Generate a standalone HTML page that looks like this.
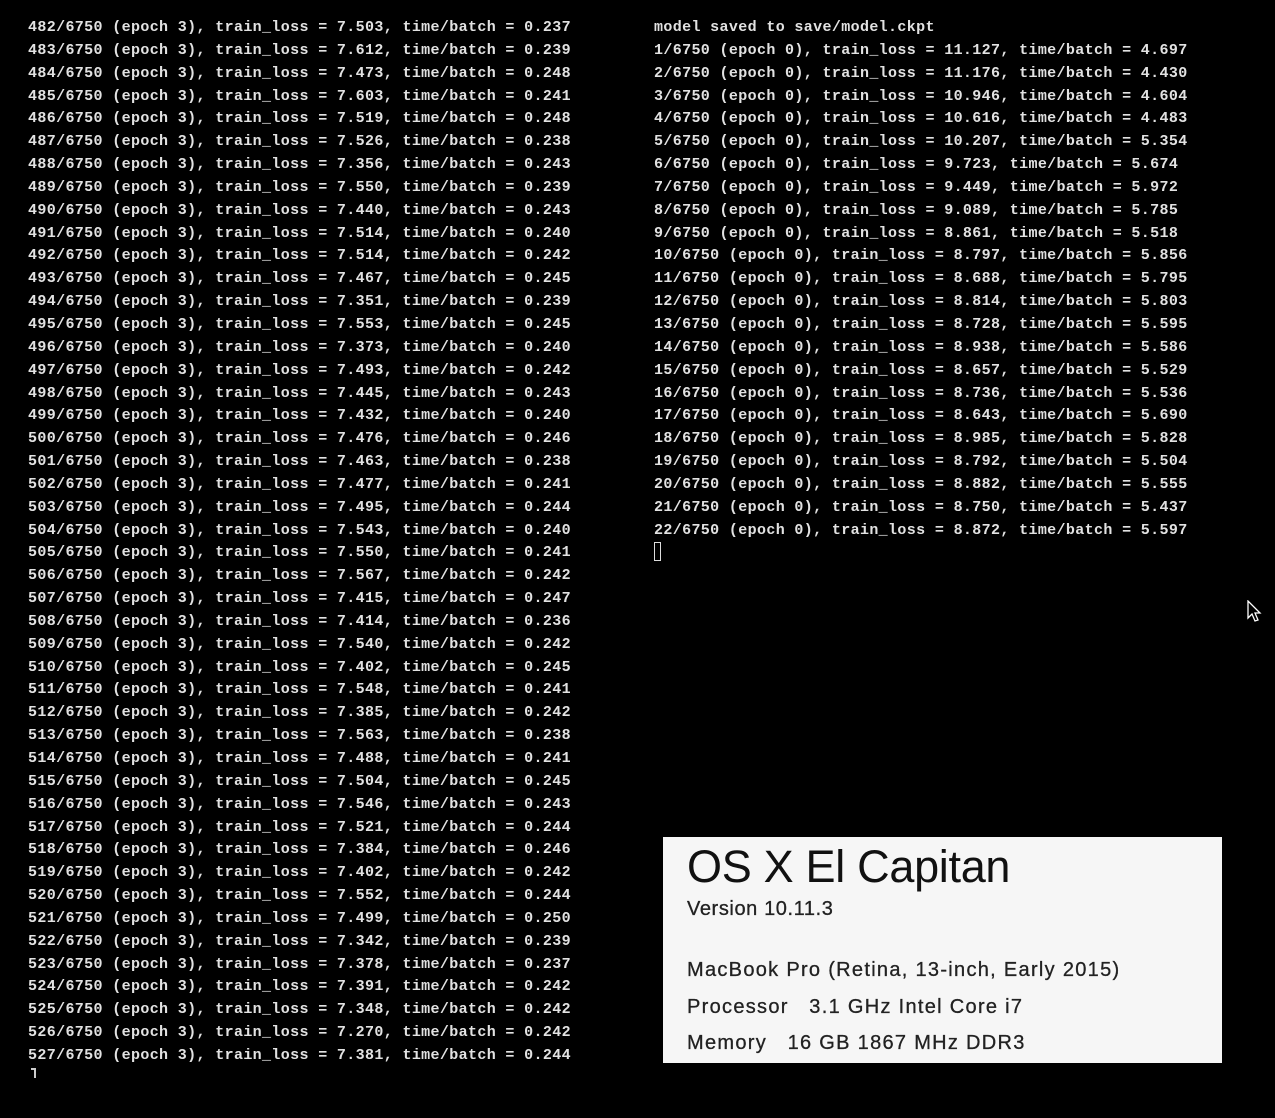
<!DOCTYPE html>
<html><head><meta charset="utf-8"><style>
body{margin:0;background:#000;width:1275px;height:1118px;overflow:hidden;position:relative}
.t{position:absolute;font-family:"Liberation Mono",monospace;font-weight:bold;font-size:15px;letter-spacing:0.36px;line-height:22.84px;color:#e2e2e2;white-space:pre;margin:0}
.box{position:absolute;left:663px;top:837px;width:559px;height:226px;background:#f6f6f6;font-family:"Liberation Sans",sans-serif;color:#222}
.box div{position:absolute;left:24px;white-space:nowrap}
.s{font-size:20px;letter-spacing:1.3px;-webkit-text-stroke:0.3px #222}
</style></head><body>
<pre class="t" style="left:28px;top:17px">482/6750 (epoch 3), train_loss = 7.503, time/batch = 0.237
483/6750 (epoch 3), train_loss = 7.612, time/batch = 0.239
484/6750 (epoch 3), train_loss = 7.473, time/batch = 0.248
485/6750 (epoch 3), train_loss = 7.603, time/batch = 0.241
486/6750 (epoch 3), train_loss = 7.519, time/batch = 0.248
487/6750 (epoch 3), train_loss = 7.526, time/batch = 0.238
488/6750 (epoch 3), train_loss = 7.356, time/batch = 0.243
489/6750 (epoch 3), train_loss = 7.550, time/batch = 0.239
490/6750 (epoch 3), train_loss = 7.440, time/batch = 0.243
491/6750 (epoch 3), train_loss = 7.514, time/batch = 0.240
492/6750 (epoch 3), train_loss = 7.514, time/batch = 0.242
493/6750 (epoch 3), train_loss = 7.467, time/batch = 0.245
494/6750 (epoch 3), train_loss = 7.351, time/batch = 0.239
495/6750 (epoch 3), train_loss = 7.553, time/batch = 0.245
496/6750 (epoch 3), train_loss = 7.373, time/batch = 0.240
497/6750 (epoch 3), train_loss = 7.493, time/batch = 0.242
498/6750 (epoch 3), train_loss = 7.445, time/batch = 0.243
499/6750 (epoch 3), train_loss = 7.432, time/batch = 0.240
500/6750 (epoch 3), train_loss = 7.476, time/batch = 0.246
501/6750 (epoch 3), train_loss = 7.463, time/batch = 0.238
502/6750 (epoch 3), train_loss = 7.477, time/batch = 0.241
503/6750 (epoch 3), train_loss = 7.495, time/batch = 0.244
504/6750 (epoch 3), train_loss = 7.543, time/batch = 0.240
505/6750 (epoch 3), train_loss = 7.550, time/batch = 0.241
506/6750 (epoch 3), train_loss = 7.567, time/batch = 0.242
507/6750 (epoch 3), train_loss = 7.415, time/batch = 0.247
508/6750 (epoch 3), train_loss = 7.414, time/batch = 0.236
509/6750 (epoch 3), train_loss = 7.540, time/batch = 0.242
510/6750 (epoch 3), train_loss = 7.402, time/batch = 0.245
511/6750 (epoch 3), train_loss = 7.548, time/batch = 0.241
512/6750 (epoch 3), train_loss = 7.385, time/batch = 0.242
513/6750 (epoch 3), train_loss = 7.563, time/batch = 0.238
514/6750 (epoch 3), train_loss = 7.488, time/batch = 0.241
515/6750 (epoch 3), train_loss = 7.504, time/batch = 0.245
516/6750 (epoch 3), train_loss = 7.546, time/batch = 0.243
517/6750 (epoch 3), train_loss = 7.521, time/batch = 0.244
518/6750 (epoch 3), train_loss = 7.384, time/batch = 0.246
519/6750 (epoch 3), train_loss = 7.402, time/batch = 0.242
520/6750 (epoch 3), train_loss = 7.552, time/batch = 0.244
521/6750 (epoch 3), train_loss = 7.499, time/batch = 0.250
522/6750 (epoch 3), train_loss = 7.342, time/batch = 0.239
523/6750 (epoch 3), train_loss = 7.378, time/batch = 0.237
524/6750 (epoch 3), train_loss = 7.391, time/batch = 0.242
525/6750 (epoch 3), train_loss = 7.348, time/batch = 0.242
526/6750 (epoch 3), train_loss = 7.270, time/batch = 0.242
527/6750 (epoch 3), train_loss = 7.381, time/batch = 0.244</pre>
<div style="position:absolute;left:31px;top:1068px;width:5px;height:2px;background:#ccc"></div>
<div style="position:absolute;left:34px;top:1068px;width:2px;height:10px;background:#ccc"></div>
<pre class="t" style="left:654px;top:17px">model saved to save/model.ckpt
1/6750 (epoch 0), train_loss = 11.127, time/batch = 4.697
2/6750 (epoch 0), train_loss = 11.176, time/batch = 4.430
3/6750 (epoch 0), train_loss = 10.946, time/batch = 4.604
4/6750 (epoch 0), train_loss = 10.616, time/batch = 4.483
5/6750 (epoch 0), train_loss = 10.207, time/batch = 5.354
6/6750 (epoch 0), train_loss = 9.723, time/batch = 5.674
7/6750 (epoch 0), train_loss = 9.449, time/batch = 5.972
8/6750 (epoch 0), train_loss = 9.089, time/batch = 5.785
9/6750 (epoch 0), train_loss = 8.861, time/batch = 5.518
10/6750 (epoch 0), train_loss = 8.797, time/batch = 5.856
11/6750 (epoch 0), train_loss = 8.688, time/batch = 5.795
12/6750 (epoch 0), train_loss = 8.814, time/batch = 5.803
13/6750 (epoch 0), train_loss = 8.728, time/batch = 5.595
14/6750 (epoch 0), train_loss = 8.938, time/batch = 5.586
15/6750 (epoch 0), train_loss = 8.657, time/batch = 5.529
16/6750 (epoch 0), train_loss = 8.736, time/batch = 5.536
17/6750 (epoch 0), train_loss = 8.643, time/batch = 5.690
18/6750 (epoch 0), train_loss = 8.985, time/batch = 5.828
19/6750 (epoch 0), train_loss = 8.792, time/batch = 5.504
20/6750 (epoch 0), train_loss = 8.882, time/batch = 5.555
21/6750 (epoch 0), train_loss = 8.750, time/batch = 5.437
22/6750 (epoch 0), train_loss = 8.872, time/batch = 5.597</pre>
<div style="position:absolute;left:654px;top:542px;width:7px;height:19px;border:1.5px solid #ddd;box-sizing:border-box"></div>
<svg style="position:absolute;left:1247px;top:600px" width="16" height="24" viewBox="0 0 16 24"><path d="M1 1 L1 18 L5 14 L8 21 L11 20 L8 13 L13 13 Z" fill="#000" stroke="#fff" stroke-width="1.3"/></svg>
<div class="box">
<div style="top:4px;font-size:45px;letter-spacing:-0.3px;color:#111">OS X El Capitan</div>
<div class="s" style="top:61px;letter-spacing:0.6px">Version 10.11.3</div>
<div class="s" style="top:122px">MacBook Pro (Retina, 13-inch, Early 2015)</div>
<div class="s" style="top:159px">Processor&nbsp;&nbsp; 3.1 GHz Intel Core i7</div>
<div class="s" style="top:195px">Memory&nbsp;&nbsp; 16 GB 1867 MHz DDR3</div>
</div>
</body></html>
